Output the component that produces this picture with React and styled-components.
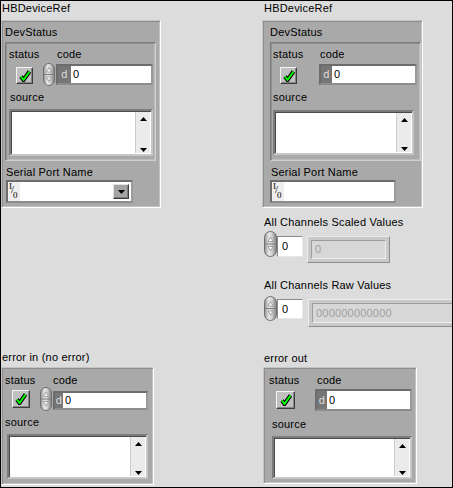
import React, { useId } from "react";
import styled, { createGlobalStyle } from "styled-components";

const Global = createGlobalStyle`
  html, body { margin: 0; padding: 0; background: #dcdcdc; }
  body { font-family: "Liberation Sans", Arial, sans-serif; }
`;

const Frame = styled.div`
  width: 453px;
  height: 488px;
  box-sizing: border-box;
  border: 1px solid #000;
  background: #dcdcdc;
  overflow: hidden;
  display: grid;
  grid-template-columns: 261px 1fr;
  font: 11px/13px "Liberation Sans", Arial, sans-serif;
  letter-spacing: 0.2px;
  color: #000;
`;

const Column = styled.div`
  display: flex;
  flex-direction: column;
  align-items: flex-start;
  padding-top: 1px;
  min-width: 0;
`;

const Label = styled.div`
  height: 13px;
  line-height: 13px;
  white-space: nowrap;
  flex: none;
  margin-left: ${(p) => p.$ml || 0}px;
  margin-top: ${(p) => p.$mt || 0}px;
`;

const DeviceCluster = styled.div`
  box-sizing: border-box;
  width: ${(p) => p.$w}px;
  height: 188px;
  margin-top: 5px;
  background: #a9a9a9;
  border: 1px solid;
  border-color: #c4c4c4 #fff #fff #c4c4c4;
  box-shadow: inset 1px 1px 0 #8e8e8e, inset -1px -1px 0 #c2c2c2;
  padding: 5px 0 0 ${(p) => p.$pl}px;
  display: flex;
  flex-direction: column;
  align-items: flex-start;
  flex: none;
`;

const ClusterBox = styled.div`
  box-sizing: border-box;
  width: ${(p) => p.$w}px;
  height: ${(p) => p.$h}px;
  margin-left: ${(p) => p.$ml || 0}px;
  margin-top: ${(p) => p.$mt || 0}px;
  background: #a9a9a9;
  border: 1px solid;
  border-color: ${(p) =>
    p.$nested ? "#7a7a7a #cfcfcf #cfcfcf #7a7a7a" : "#c4c4c4 #fff #fff #c4c4c4"};
  box-shadow: ${(p) =>
    p.$nested
      ? "inset 1px 1px 0 #909090, inset -1px -1px 0 #bcbcbc"
      : "inset 1px 1px 0 #8e8e8e, inset -1px -1px 0 #c2c2c2"};
  display: flex;
  flex-direction: column;
  align-items: flex-start;
  flex: none;
`;

const TopRow = styled.div`
  box-sizing: border-box;
  height: ${(p) => p.$h}px;
  padding-top: ${(p) => p.$pt}px;
  display: flex;
  align-items: flex-start;
  flex: none;
`;

const StatusCol = styled.div`
  width: ${(p) => p.$w}px;
  margin-left: ${(p) => p.$ml}px;
  display: flex;
  flex-direction: column;
  align-items: flex-start;
`;

const CodeCol = styled.div`
  display: flex;
  flex-direction: column;
  align-items: flex-start;
`;

const ControlRow = styled.div`
  display: flex;
  align-items: flex-start;
`;

const CheckBox = styled.div`
  box-sizing: border-box;
  width: ${(p) => p.$w}px;
  height: ${(p) => p.$h}px;
  margin-left: ${(p) => p.$ml}px;
  margin-top: ${(p) => p.$mt}px;
  background: #c0c0c0;
  border: 1px solid;
  border-color: #f4f4f4 #3c3c3c #3c3c3c #f4f4f4;
  box-shadow: inset -1px -1px 0 #848484;
  display: flex;
  align-items: center;
  justify-content: center;
  line-height: 0;
`;

const CodeField = styled.div`
  box-sizing: border-box;
  width: ${(p) => p.$w}px;
  height: ${(p) => p.$h}px;
  margin-left: ${(p) => p.$ml || 0}px;
  margin-top: ${(p) => p.$mt}px;
  display: flex;
  border: 2px solid;
  border-color: #6c6c6c #9a9a9a #8c8c8c #6c6c6c;
  background: #fff;
  flex: none;
`;

const Radix = styled.div`
  width: ${(p) => p.$w}px;
  flex: none;
  background: #767676;
  color: #dedede;
  text-align: center;
  display: flex;
  align-items: center;
  justify-content: center;
`;

const CodeValue = styled.div`
  padding-left: 2px;
  display: flex;
  align-items: center;
  color: #000;
`;

const TextBox = styled.div`
  box-sizing: border-box;
  width: ${(p) => p.$w}px;
  height: ${(p) => p.$h}px;
  margin-left: ${(p) => p.$ml}px;
  margin-top: ${(p) => p.$mt}px;
  display: flex;
  border: 2px solid;
  border-color: #7c7c7c #c6c6c6 #c6c6c6 #7c7c7c;
  box-shadow: inset 1px 1px 0 #4a4a4a;
  background: #fff;
  flex: none;
`;

const TextArea = styled.div`
  flex: 1;
`;

const ScrollBar = styled.div`
  width: 15px;
  flex: none;
  margin: 1px 1px 1px 0;
  background: #ebebeb;
  border-left: 1px solid #cdcdcd;
  display: flex;
  flex-direction: column;
  justify-content: space-between;
  align-items: center;
  padding: 5px 0 1px;
  box-sizing: border-box;
  line-height: 0;
`;

const IOField = styled.div`
  box-sizing: border-box;
  width: ${(p) => p.$w}px;
  height: 23px;
  margin-left: ${(p) => p.$ml || 0}px;
  margin-top: ${(p) => p.$mt || 0}px;
  display: flex;
  align-items: stretch;
  border: 2px solid;
  border-color: #6c6c6c #9a9a9a #8c8c8c #6c6c6c;
  background: #fff;
  flex: none;
`;

const IOGlyph = styled.div`
  width: 12px;
  flex: none;
  background: #eeeeee;
  position: relative;
  font: 9px/9px "Liberation Serif", "Times New Roman", serif;
  letter-spacing: 0;
  color: #000;
`;

const IOPart = styled.span`
  position: absolute;
  left: ${(p) => p.$x}px;
  top: ${(p) => p.$y}px;
  font-size: ${(p) => p.$fs || 9}px;
`;

const IOSpace = styled.div`
  flex: 1;
`;

const DropButton = styled.div`
  box-sizing: border-box;
  width: 16px;
  height: 15px;
  align-self: center;
  margin-right: 2px;
  background: #a4a4a4;
  border: 1px solid;
  border-color: #e4e4e4 #3c3c3c #3c3c3c #e4e4e4;
  box-shadow: inset -1px -1px 0 #7c7c7c;
  display: flex;
  align-items: center;
  justify-content: center;
  line-height: 0;
`;

const ArrayRow = styled.div`
  display: flex;
  align-items: flex-start;
  margin-top: ${(p) => p.$mt}px;
  flex: none;
`;

const IndexField = styled.div`
  box-sizing: border-box;
  width: ${(p) => p.$w}px;
  height: ${(p) => p.$h}px;
  margin-top: ${(p) => p.$mt}px;
  border: 1px solid;
  border-color: #8a8a8a #e8e8e8 #e8e8e8 #8a8a8a;
  background: #fff;
  padding-left: 4px;
  display: flex;
  align-items: center;
  flex: none;
`;

const ElementBox = styled.div`
  box-sizing: border-box;
  width: ${(p) => p.$w}px;
  height: ${(p) => p.$h}px;
  margin-left: ${(p) => p.$ml}px;
  margin-top: ${(p) => p.$mt}px;
  background: #c9c9c9;
  border: 1px solid;
  border-color: #ececec #8e8e8e #8e8e8e #ececec;
  padding: 3px;
  flex: none;
`;

const ElementInner = styled.div`
  box-sizing: border-box;
  height: 100%;
  background: #d7d7d7;
  border: 1px solid;
  border-color: #9c9c9c #eeeeee #eeeeee #9c9c9c;
  color: #a0a0a0;
  padding-left: 3px;
  display: flex;
  align-items: center;
`;

function Spinner({ w = 12, h = 24, ml = 0, mt = 0 }) {
  const id = useId().replace(/:/g, "");
  const cx = w / 2;
  const mid = h / 2;
  return (
    <svg
      width={w}
      height={h}
      viewBox={`0 0 ${w} ${h}`}
      style={{ marginLeft: ml, marginTop: mt, flex: "none", display: "block" }}
    >
      <defs>
        <linearGradient id={`g${id}`} x1="0" x2="1" y1="0" y2="0">
          <stop offset="0" stopColor="#8c8c8c" />
          <stop offset="0.35" stopColor="#e6e6e6" />
          <stop offset="0.6" stopColor="#d4d4d4" />
          <stop offset="1" stopColor="#7c7c7c" />
        </linearGradient>
      </defs>
      <rect x="0.5" y="0.5" width={w - 1} height={h - 1} rx={(w - 1) / 2} fill={`url(#g${id})`} stroke="#707070" />
      <line x1="1.5" x2={w - 1.5} y1={mid} y2={mid} stroke="#7a7a7a" />
      <path d={`M${cx} ${mid - 7} L${cx + 2.5} ${mid - 2.5} L${cx - 2.5} ${mid - 2.5} Z`} fill="#f6f6f6" stroke="#8a8a8a" strokeWidth="0.7" />
      <path d={`M${cx} ${mid + 7} L${cx + 2.5} ${mid + 2.5} L${cx - 2.5} ${mid + 2.5} Z`} fill="#f6f6f6" stroke="#8a8a8a" strokeWidth="0.7" />
    </svg>
  );
}

function CheckMark() {
  return (
    <svg width="12" height="12" viewBox="0 0 12 12">
      <path d="M2 6.5 L4.5 10 L10.5 1.5" fill="none" stroke="#000" strokeWidth="4" strokeLinejoin="round" />
      <path d="M2 6.5 L4.5 10 L10.5 1.5" fill="none" stroke="#00ff00" strokeWidth="2" strokeLinejoin="round" />
    </svg>
  );
}

function Arrow({ down }) {
  return (
    <svg width="7" height="4" viewBox="0 0 7 4">
      <path d={down ? "M0 0 L7 0 L3.5 4 Z" : "M3.5 0 L7 4 L0 4 Z"} fill="#000" />
    </svg>
  );
}

function ErrorCluster({ L, nested, w, h, ml = 0, mt = 0 }) {
  const colStart = L.spin ? L.spin[0] : L.f[0];
  const ctrlTop = L.top + 13;
  return (
    <ClusterBox $nested={nested} $w={w} $h={h} $ml={ml} $mt={mt}>
      <TopRow $h={L.src[1]} $pt={L.top}>
        <StatusCol $ml={L.sx} $w={colStart - L.sx}>
          <Label>status</Label>
          <CheckBox $ml={L.chk[0] - L.sx} $mt={L.chk[1] - ctrlTop} $w={L.chk[2]} $h={L.chk[3]}>
            <CheckMark />
          </CheckBox>
        </StatusCol>
        <CodeCol>
          <Label $ml={L.cx - colStart}>code</Label>
          <ControlRow>
            {L.spin && <Spinner w={L.spin[2]} h={L.spin[3]} mt={L.spin[1] - ctrlTop} />}
            <CodeField
              $ml={L.spin ? L.f[0] - L.spin[0] - L.spin[2] : 0}
              $mt={L.f[1] - ctrlTop}
              $w={L.f[2]}
              $h={L.f[3]}
            >
              <Radix $w={L.f[4]}>d</Radix>
              <CodeValue>0</CodeValue>
            </CodeField>
          </ControlRow>
        </CodeCol>
      </TopRow>
      <Label $ml={L.src[0]}>source</Label>
      <TextBox $ml={L.tb[0]} $mt={L.tb[1] - L.src[1] - 13} $w={L.tb[2]} $h={L.tb[3]}>
        <TextArea />
        <ScrollBar>
          <Arrow />
          <Arrow down />
        </ScrollBar>
      </TextBox>
    </ClusterBox>
  );
}

function IOControl({ w, ml, mt, drop }) {
  return (
    <IOField $w={w} $ml={ml} $mt={mt}>
      <IOGlyph>
        <IOPart $x={1} $y={0}>I</IOPart>
        <IOPart $x={3} $y={3} $fs={11}>/</IOPart>
        <IOPart $x={5} $y={9}>0</IOPart>
      </IOGlyph>
      <IOSpace />
      {drop && (
        <DropButton>
          <Arrow down />
        </DropButton>
      )}
    </IOField>
  );
}

const A = { top: 5, sx: 3, cx: 51, chk: [10, 24, 17, 17], spin: [37, 20, 12, 23], f: [50, 21, 97, 21, 13], src: [4, 48], tb: [3, 66, 144, 47] };
const B = { top: 5, sx: 2, cx: 49, chk: [9, 24, 17, 17], spin: null, f: [48, 21, 98, 21, 11], src: [2, 48], tb: [2, 67, 141, 45] };
const C = { top: 6, sx: 3, cx: 51, chk: [10, 22, 18, 18], spin: [38, 19, 12, 24], f: [51, 23, 95, 19, 8], src: [3, 48], tb: [5, 66, 141, 45] };
const D = { top: 6, sx: 5, cx: 53, chk: [12, 23, 19, 18], spin: null, f: [51, 21, 97, 22, 10], src: [8, 50], tb: [8, 68, 140, 43] };

export default function App() {
  return (
    <>
      <Global />
      <Frame>
        <Column>
          <Label $ml={1}>HBDeviceRef</Label>
          <DeviceCluster $w={160} $pl={3}>
            <Label>DevStatus</Label>
            <ErrorCluster nested L={A} w={151} h={119} mt={3} />
            <Label $ml={1} $mt={5}>Serial Port Name</Label>
            <IOControl w={127} ml={1} mt={1} drop />
          </DeviceCluster>
          <Label $ml={1} $mt={143}>error in (no error)</Label>
          <ErrorCluster L={C} w={153} h={118} mt={3} />
        </Column>
        <Column>
          <Label $ml={2}>HBDeviceRef</Label>
          <DeviceCluster $w={161} $pl={7}>
            <Label>DevStatus</Label>
            <ErrorCluster nested L={B} w={151} h={119} mt={3} />
            <Label $ml={1} $mt={5}>Serial Port Name</Label>
            <IOControl w={126} ml={0} mt={1} />
          </DeviceCluster>
          <Label $ml={2} $mt={8}>All Channels Scaled Values</Label>
          <ArrayRow $mt={2}>
            <Spinner w={13} h={26} ml={2} />
            <IndexField $w={26} $h={21} $mt={5}>0</IndexField>
            <ElementBox $ml={4} $mt={5} $w={83} $h={27}>
              <ElementInner>0</ElementInner>
            </ElementBox>
          </ArrayRow>
          <Label $ml={2} $mt={16}>All Channels Raw Values</Label>
          <ArrayRow $mt={4}>
            <Spinner w={13} h={25} ml={2} />
            <IndexField $w={26} $h={20} $mt={3}>0</IndexField>
            <ElementBox $ml={5} $mt={3} $w={150} $h={28}>
              <ElementInner>000000000000</ElementInner>
            </ElementBox>
          </ArrayRow>
          <Label $ml={2} $mt={25}>error out</Label>
          <ErrorCluster L={D} w={154} h={117} ml={1} mt={2} />
        </Column>
      </Frame>
    </>
  );
}
